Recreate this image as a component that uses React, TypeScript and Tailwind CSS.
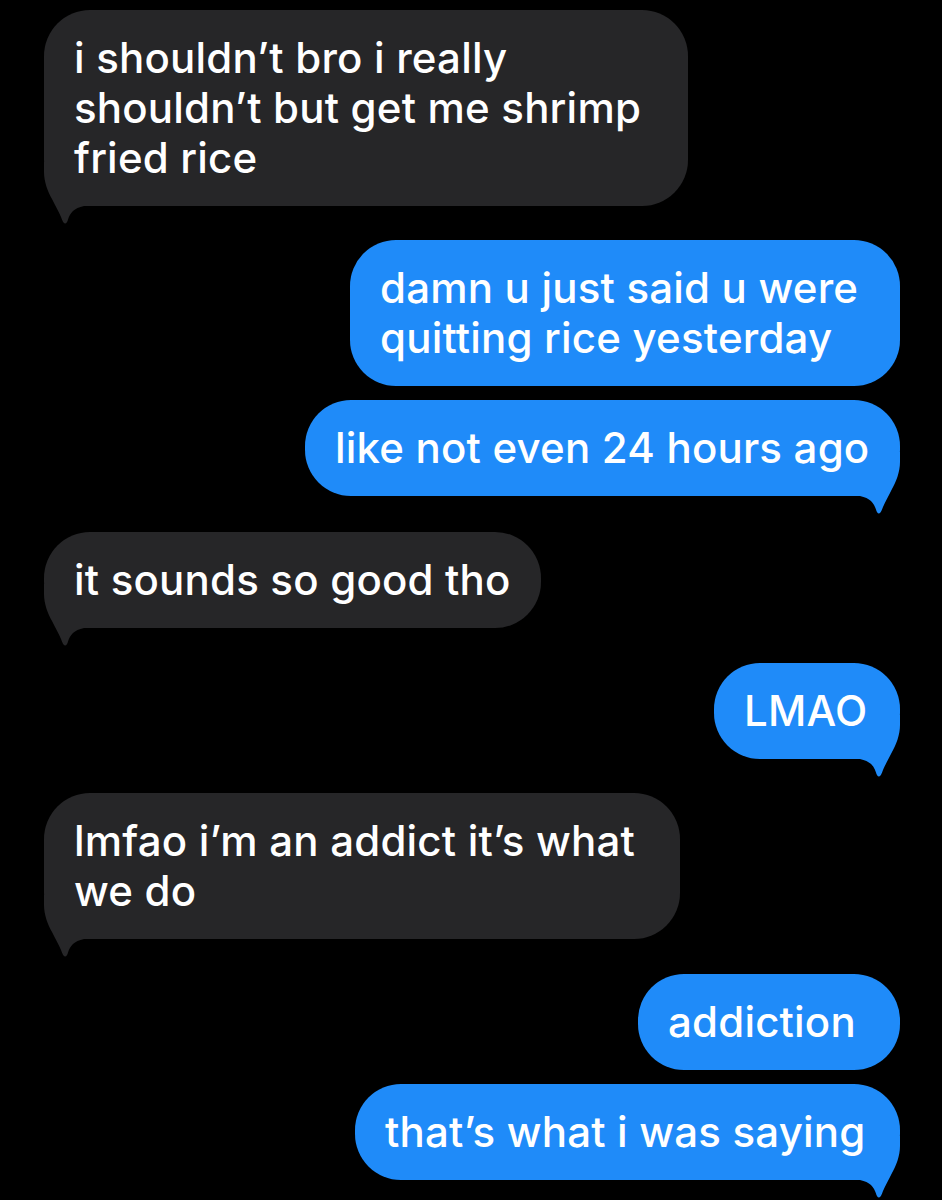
type Msg = {
  from: "me" | "them";
  lines: string[];
  width: string;
  tail?: boolean;
  gap: string;
};

const messages: Msg[] = [
  {
    from: "them",
    lines: ["i shouldn’t bro i really", "shouldn’t but get me shrimp", "fried rice"],
    width: "w-[644px]",
    tail: true,
    gap: "mt-[10px]",
  },
  {
    from: "me",
    lines: ["damn u just said u were", "quitting rice yesterday"],
    width: "w-[550px]",
    gap: "mt-[34px]",
  },
  {
    from: "me",
    lines: ["like not even 24 hours ago"],
    width: "w-[595px]",
    tail: true,
    gap: "mt-[14px]",
  },
  {
    from: "them",
    lines: ["it sounds so good tho"],
    width: "w-[497px]",
    tail: true,
    gap: "mt-[36px]",
  },
  {
    from: "me",
    lines: ["LMAO"],
    width: "w-[186px]",
    tail: true,
    gap: "mt-[35px]",
  },
  {
    from: "them",
    lines: ["lmfao i’m an addict it’s what", "we do"],
    width: "w-[636px]",
    tail: true,
    gap: "mt-[34px]",
  },
  {
    from: "me",
    lines: ["addiction"],
    width: "w-[262px]",
    gap: "mt-[35px]",
  },
  {
    from: "me",
    lines: ["that’s what i was saying"],
    width: "w-[545px]",
    tail: true,
    gap: "mt-[14px]",
  },
];

// bubble tail, drawn for the left side and mirrored for the right
function Tail({ side, color }: { side: "left" | "right"; color: string }) {
  return (
    <svg
      className={`absolute bottom-[-18px] ${side === "left" ? "left-0" : "right-0 -scale-x-100"}`}
      width="48"
      height="62"
      viewBox="0 0 48 62"
    >
      <path
        d="M0 0 L0 10 C0 20 4 30 8 37 C11 43 15 50 17 55 C18.5 59 19.5 61.5 21 61.5 C22.5 61.5 23.5 59.5 24 57.5 C26 51 30 46 40 44 L48 44 L48 0 Z"
        fill={color}
      />
    </svg>
  );
}

function Bubble({ msg }: { msg: Msg }) {
  const mine = msg.from === "me";
  const color = mine ? "#1f8bf9" : "#262628";
  return (
    <div className={`flex ${mine ? "justify-end" : "justify-start"} ${msg.gap}`}>
      <div
        className={`relative ${msg.width} rounded-[46px] py-[23px] px-[30px] ${
          mine ? "bg-[#1f8bf9]" : "bg-[#262628]"
        }`}
      >
        {msg.tail && <Tail side={mine ? "right" : "left"} color={color} />}
        <div className="relative">
          {msg.lines.map((l, i) => (
            <div
              key={i}
              className="whitespace-nowrap text-white text-[42px] leading-[50px] font-medium tracking-[0.2px]"
            >
              {l}
            </div>
          ))}
        </div>
      </div>
    </div>
  );
}

export default function App() {
  return (
    <div
      className="w-[942px] h-[1200px] bg-black pl-[44px] pr-[42px] pt-px overflow-hidden"
      style={{ fontFamily: "Inter, 'Liberation Sans', sans-serif" }}
    >
      <div className="-mt-px">
        {messages.map((m, i) => (
          <Bubble key={i} msg={m} />
        ))}
      </div>
    </div>
  );
}
